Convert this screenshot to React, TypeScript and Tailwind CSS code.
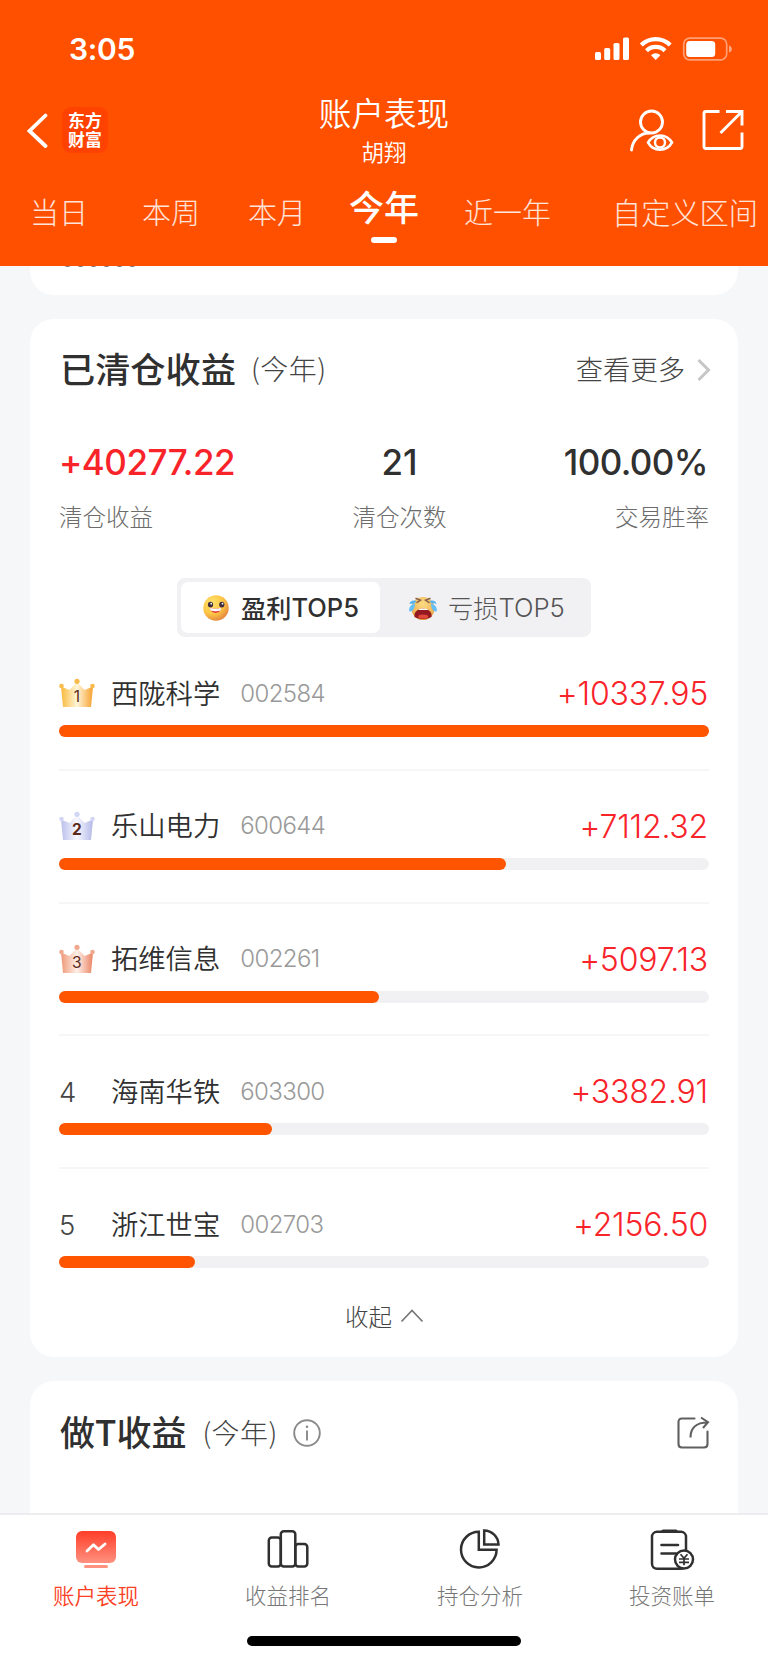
import { ReactNode } from 'react'

const profits = [
  { rank: 1, name: '西陇科学', code: '002584', amount: '+10337.95', width: 650 },
  { rank: 2, name: '乐山电力', code: '600644', amount: '+7112.32', width: 447 },
  { rank: 3, name: '拓维信息', code: '002261', amount: '+5097.13', width: 320 },
  { rank: 4, name: '海南华铁', code: '603300', amount: '+3382.91', width: 213 },
  { rank: 5, name: '浙江世宝', code: '002703', amount: '+2156.50', width: 136 },
]

const crownColors = [
  ['#f9b93c', '#fff6d8', '#f7a02f', '#f9bb4b'],
  ['#bcc0ea', '#f7f8ff', '#b3b9e8', '#d3d6f3'],
  ['#ee9878', '#fff0e8', '#ea8464', '#f1a88e'],
]

function Crown({ rank }: { rank: number }) {
  const [left, mid, right, dot] = crownColors[rank - 1]
  return (
    <svg width="36" height="30" viewBox="0 0 36 30">
      <defs>
        <linearGradient id={`crown${rank}`} x1="0" x2="1" y1="0" y2="0">
          <stop offset="0" stopColor={left} />
          <stop offset="0.5" stopColor={mid} />
          <stop offset="1" stopColor={right} />
        </linearGradient>
      </defs>
      <path d="M2 8.500 L10.500 12 L18 4 L25.500 12 L34 8.500 L32 29 H4 Z" fill={`url(#crown${rank})`} />
      <circle cx="2.500" cy="8" r="2.300" fill={dot} />
      <circle cx="18" cy="3.300" r="2.600" fill={dot} />
      <circle cx="33.500" cy="8" r="2.300" fill={dot} />
      <text
        x="17.800"
        y="24"
        textAnchor="middle"
        fontSize="15.500"
        fontFamily="Inter, sans-serif"
        fontWeight={rank === 2 ? 700 : 400}
        fill="#5c2a1c"
      >
        {rank}
      </text>
    </svg>
  )
}

function StatusIcons() {
  return (
    <svg width="140" height="26" viewBox="0 0 140 26" fill="#fff">
      <rect x="0" y="16" width="6" height="8" rx="1.600" />
      <rect x="9.200" y="12" width="6" height="12" rx="1.600" />
      <rect x="18.500" y="7" width="6" height="17" rx="1.600" />
      <rect x="28" y="1.500" width="6" height="22.500" rx="1.600" />
      <g fill="none" stroke="#fff" strokeWidth="4.200">
        <path d="M46.300 9 A20.500 20.500 0 0 1 75.200 9" />
        <path d="M51.500 14.800 A13 13 0 0 1 70 14.800" />
      </g>
      <path d="M60.700 24 L56 19.200 A6.600 6.600 0 0 1 65.400 19.200 Z" />
      <rect x="88.700" y="2.200" width="43" height="21.600" rx="6" fill="none" stroke="#fff" strokeOpacity="0.450" strokeWidth="1.700" />
      <rect x="91.200" y="5" width="29" height="16" rx="3.500" />
      <path d="M134 9.500 C137.800 10.500 137.800 15.500 134 16.500 Z" fillOpacity="0.500" />
    </svg>
  )
}

function Tab({ children, className }: { children: ReactNode; className: string }) {
  return <span className={`whitespace-nowrap leading-[40px] font-light text-white/85 ${className}`}>{children}</span>
}

function HappyFace() {
  return (
    <svg width="26" height="26" viewBox="0 0 26 26">
      <defs>
        <radialGradient id="happy" cx="0.35" cy="0.3" r="0.8">
          <stop offset="0" stopColor="#ffe46c" />
          <stop offset="0.550" stopColor="#fcc544" />
          <stop offset="1" stopColor="#e07a3e" />
        </radialGradient>
      </defs>
      <circle cx="13" cy="13" r="12.700" fill="url(#happy)" />
      <ellipse cx="7.500" cy="9.600" rx="2.600" ry="2.900" fill="#3d2b3d" />
      <ellipse cx="18.800" cy="9.600" rx="2.600" ry="2.900" fill="#3d2b3d" />
      <circle cx="8.200" cy="8.700" r="0.900" fill="#fff" />
      <circle cx="19.500" cy="8.700" r="0.900" fill="#fff" />
      <path d="M7 12.800 Q12.500 14.500 18 12.800 C18 19.500 7.500 19.800 7 12.800 Z" fill="#e2403f" />
      <path d="M7 12.800 Q12.500 14.500 18 12.800 L17.600 15.600 Q12.500 17 7.600 15.600 Z" fill="#fff" />
    </svg>
  )
}

function CryFace() {
  return (
    <svg width="30" height="26" viewBox="0 0 30 26">
      <defs>
        <radialGradient id="cry" cx="0.5" cy="0.3" r="0.7">
          <stop offset="0" stopColor="#fbdc84" />
          <stop offset="0.700" stopColor="#f3b95a" />
          <stop offset="1" stopColor="#e09038" />
        </radialGradient>
      </defs>
      <ellipse cx="15" cy="13.500" rx="11.500" ry="11.500" fill="url(#cry)" />
      <path d="M7.500 3.200 L12.500 5.200 L8.500 7.800 M22.500 3.200 L17.500 5.200 L21.500 7.800" fill="none" stroke="#8a6550" strokeWidth="1.500" />
      <path d="M6.500 22 C5 10.500 25 10.500 23.500 22 C19 24.500 11 24.500 6.500 22 Z" fill="#941a20" />
      <path d="M10.500 14.200 C13 13.200 17.500 13.200 20 14.200 L19.500 15 H11 Z" fill="#fff" />
      <ellipse cx="15.200" cy="21.500" rx="5" ry="2" fill="#e0483c" />
      <path d="M8.500 6 C5 4.500 2 6 1.500 9 C4 8.500 6.500 9.500 8.500 6 Z M21.500 6 C25 4.500 28 6 28.500 9 C26 8.500 23.500 9.500 21.500 6 Z" fill="#53b4f4" />
      <path d="M7 8.500 C3 9.500 0 13 1.500 16.500 C5 17 7 13 7 8.500 Z M23 8.500 C27 9.500 30 13 28.500 16.500 C25 17 23 13 23 8.500 Z" fill="#65bef5" />
    </svg>
  )
}

function Header() {
  return (
    <header className="flex h-[266px] shrink-0 flex-col bg-[#ff5000] text-white">
      <div className="flex h-[84px] items-start justify-between pt-[36px] pr-[33px] pl-[69px]">
        <span className="font-[Inter] text-[30px] leading-[27px] font-semibold tracking-[-0.300px]">3:05</span>
        <StatusIcons />
      </div>
      <div className="grid h-[96px] grid-cols-3">
        <div className="flex items-start pt-[23px] pl-[27px]">
          <svg width="21" height="48" viewBox="0 0 21 48" fill="none" stroke="#fff" strokeWidth="3.800">
            <path d="M18.500 8.500 L2.500 24 L18.500 39" strokeLinecap="round" />
          </svg>
          <div className="ml-[14px] flex size-[46px] flex-col items-center justify-center rounded-[9px] bg-[#ff4200] pt-[2px] font-['Liberation_Sans','Noto_Sans_CJK_SC',sans-serif] text-[16.900px] leading-[19.500px] font-bold">
            <span>东方</span>
            <span>财富</span>
          </div>
        </div>
        <div className="flex flex-col items-center pt-[8px]">
          <h1 className="text-[32.600px] leading-[40px] font-[350]">账户表现</h1>
          <span className="mt-[5px] text-[22.500px] leading-[28px] font-[350]">胡翔</span>
        </div>
        <div className="flex items-start justify-end pt-[23px] pr-[23px]">
          <svg width="46" height="46" viewBox="0 0 46 46" fill="none" stroke="#fff" strokeWidth="2.900">
            <circle cx="22.500" cy="15" r="11" />
            <path d="M2.500 43 C3.500 33 11 26 20.500 26" strokeLinecap="round" />
            <path d="M19 35.500 C24.500 26 37.500 26 43 35.500 C37.500 45 24.500 45 19 35.500 Z" strokeWidth="2.500" />
            <circle cx="31" cy="35.500" r="5" strokeWidth="2.500" />
          </svg>
          <svg className="ml-[26px]" width="44" height="46" viewBox="0 0 44 46" fill="none" stroke="#fff" strokeWidth="2.900">
            <path d="M18.500 4.500 H5 Q3 4.500 3 6.500 V39.500 Q3 41.500 5 41.500 H39 Q41 41.500 41 39.500 V25.500" />
            <path d="M25 4.500 H41 V18.500 M40 5.500 L19.500 26" />
          </svg>
        </div>
      </div>
      <nav className="flex h-[86px] items-start pt-[11px]">
        <Tab className="ml-[30px] text-[29px]">当日</Tab>
        <Tab className="ml-[54px] text-[29px]">本周</Tab>
        <Tab className="ml-[48px] text-[29px]">本月</Tab>
        <div className="ml-[43px] flex w-[70px] flex-col items-center">
          <span className="-mt-[5px] text-[35px] leading-[40px] font-medium whitespace-nowrap">今年</span>
          <span className="mt-[11px] h-[6px] w-[26px] rounded-full bg-white" />
        </div>
        <Tab className="ml-[45px] text-[29px]">近一年</Tab>
        <Tab className="ml-[61px] text-[29.200px]">自定义区间</Tab>
      </nav>
    </header>
  )
}

function Stats() {
  return (
    <div className="mt-[43px] flex h-[104px] justify-between">
      <div>
        <p className="font-[Inter] text-[35px] leading-[54px] font-medium tracking-[-0.500px] text-[#f9232a]">+40277.22</p>
        <p className="mt-[9px] text-[23.500px] leading-[36px] font-light text-[#6c6c6c]">清仓收益</p>
      </div>
      <div className="text-center">
        <p className="font-[Inter] text-[35px] leading-[54px] font-medium">21</p>
        <p className="mt-[9px] text-[23.500px] leading-[36px] font-light text-[#6c6c6c]">清仓次数</p>
      </div>
      <div className="text-right">
        <p className="pr-[1px] font-[Inter] text-[35px] leading-[54px] font-medium tracking-[-0.600px]">100.00%</p>
        <p className="mt-[9px] text-[23.500px] leading-[36px] font-light text-[#6c6c6c]">交易胜率</p>
      </div>
    </div>
  )
}

function TopSwitch() {
  return (
    <div className="mx-auto flex h-[59px] w-[414px] rounded-[8px] bg-[#f1f1f4] p-[4px]">
      <div className="flex w-[199px] items-center rounded-[7px] bg-white pl-[22px]">
        <HappyFace />
        <span className="-mt-[2px] ml-[12px] flex items-center text-[25.200px] leading-[36px] font-medium whitespace-nowrap">
          盈利<span className="mt-[2px] font-[Inter] text-[25.500px]">TOP5</span>
        </span>
      </div>
      <div className="flex flex-1 items-center pl-[28px]">
        <CryFace />
        <span className="-mt-[2px] ml-[10px] flex items-center text-[25.200px] leading-[36px] font-light whitespace-nowrap text-[#555]">
          亏损<span className="mt-[2px] font-[Inter] text-[25.700px]">TOP5</span>
        </span>
      </div>
    </div>
  )
}

function ProfitList() {
  return (
    <ul className="mt-[1px]">
      {profits.map((item) => (
        <li key={item.rank} className="flex h-[132.800px] flex-col border-b-2 border-[#f6f6f7] pt-[35px] last:h-[102px] last:border-0">
          <div className="flex h-[40px] items-center">
            <div className="flex w-[52px] items-center">
              {item.rank <= 3 ? (
                <Crown rank={item.rank} />
              ) : (
                <span className="mt-[2px] font-[Inter] text-[27.500px] font-light text-[#444]">{item.rank}</span>
              )}
            </div>
            <span className="-mt-[3px] text-[27.300px] leading-[40px] font-[350] whitespace-nowrap">{item.name}</span>
            <span className="mt-[1px] ml-[20px] font-[Inter] text-[24px] leading-[40px] font-[350] tracking-[-0.600px] text-[#999]">{item.code}</span>
            <span className="mt-[2px] ml-auto pr-[1px] font-[Inter] text-[32px] leading-[40px] font-[350] tracking-[-0.200px] text-[#f9232a]">{item.amount}</span>
          </div>
          <div className="mt-[12px] h-[12px] rounded-full bg-[#f1f1f4]">
            <div className="h-full rounded-full bg-[#ff5500]" style={{ width: item.width }} />
          </div>
        </li>
      ))}
    </ul>
  )
}

function NavItem({ label, active, children }: { label: string; active?: boolean; children: ReactNode }) {
  return (
    <div className="flex flex-1 flex-col items-center pt-[14px]">
      <svg width="46" height="44" viewBox="0 0 46 44" fill="none" stroke="#303030" strokeWidth="2.500">
        {children}
      </svg>
      <span className={`mt-[6px] text-[21.500px] leading-[32px] ${active ? 'font-[350] text-[#fb3f25]' : 'font-light text-[#777]'}`}>{label}</span>
    </div>
  )
}

function BottomNav() {
  return (
    <footer className="flex h-[150px] shrink-0 flex-col border-t-2 border-[#ededef] bg-white">
      <div className="flex h-[121px]">
        <NavItem label="账户表现" active>
          <defs>
            <linearGradient id="active" x1="0" x2="0" y1="0" y2="1">
              <stop offset="0" stopColor="#ff3d28" />
              <stop offset="1" stopColor="#ff9180" />
            </linearGradient>
          </defs>
          <rect x="3" y="2" width="40" height="32" rx="6" fill="url(#active)" stroke="none" />
          <path d="M14 22 L20.500 15.800 L25.500 20.500 L32 15" stroke="#fff" strokeWidth="2.800" strokeLinecap="round" strokeLinejoin="round" />
          <rect x="11" y="36" width="24" height="3" rx="1.500" fill="#ff9180" stroke="none" />
        </NavItem>
        <NavItem label="收益排名">
          <rect x="3.800" y="8.500" width="12" height="29" rx="3" />
          <rect x="15.800" y="2.300" width="14.500" height="35.200" rx="3" />
          <rect x="30.300" y="15" width="12" height="22.500" rx="3" />
        </NavItem>
        <NavItem label="持仓分析">
          <path d="M21.800 2.800 A17.800 17.800 0 1 0 39.600 20.800 H21.800 Z" />
          <path d="M27.200 1.500 A14.500 14.500 0 0 1 41.500 15.500 H27.200 Z" />
        </NavItem>
        <NavItem label="投资账单">
          <rect x="3" y="2.800" width="34" height="37" rx="5" />
          <path d="M14 2.200 H27" strokeWidth="3.500" strokeLinecap="round" />
          <path d="M12.500 16 H29 M12.500 24.500 H27" strokeWidth="2.600" strokeLinecap="round" />
          <circle cx="35" cy="30.500" r="9" fill="#fff" />
          <path d="M31.500 25.200 L35 29.200 L38.500 25.200 M35 29.200 V36.200 M30 30 H40 M30 33.300 H40" strokeWidth="1.700" />
        </NavItem>
      </div>
      <div className="mx-auto h-[10px] w-[274px] rounded-full bg-black" />
    </footer>
  )
}

export default function App() {
  return (
    <div className="flex h-[1663px] w-[768px] flex-col overflow-hidden bg-[#f6f7f9] font-['Noto_Sans_CJK_SC',sans-serif] text-[#303030]">
      <Header />
      <main className="flex h-[1247px] flex-col overflow-hidden px-[30px]">
        {/* tail of the card scrolled under the header */}
        <section className="h-[29px] shrink-0 overflow-hidden rounded-b-[24px] bg-white pl-[31px]">
          <p className="-mt-[20px] font-[Inter] text-[21px] leading-[28px] font-light text-[#777]">000000</p>
        </section>

        <section className="mt-[24px] flex h-[1038px] shrink-0 flex-col rounded-[24px] bg-white px-[29px]">
          <div className="mt-[25px] flex h-[48px] items-center justify-between">
            <div className="flex items-center pl-[1px]">
              <h2 className="-mt-[1px] text-[35.200px] leading-[48px] font-medium">已清仓收益</h2>
              <span className="ml-[15px] text-[28px] font-light tracking-[0.500px] text-[#444]">(今年)</span>
            </div>
            <div className="-mr-[2px] flex items-center text-[27.300px] font-light text-[#444]">
              <span>查看更多</span>
              <svg className="mt-[3px] ml-[11px]" width="15" height="24" viewBox="0 0 15 24" fill="none" stroke="#c6c6c6" strokeWidth="3">
                <path d="M2.500 2 L12.500 12 L2.500 22" />
              </svg>
            </div>
          </div>
          <Stats />
          <div className="mt-[39px]">
            <TopSwitch />
          </div>
          <ProfitList />
          <div className="mt-[27px] flex items-center justify-center pl-[1px] text-[23.500px] leading-[36px] font-light text-[#444]">
            收起
            <svg className="ml-[8px]" width="24" height="16" viewBox="0 0 24 16" fill="none" stroke="#777" strokeWidth="1.700">
              <path d="M1.500 13.500 L12 2.500 L22.500 13.500" />
            </svg>
          </div>
        </section>

        <section className="mt-[24px] h-[200px] shrink-0 rounded-t-[24px] bg-white px-[29px] pt-[28px]">
          <div className="flex h-[48px] items-center">
            <h2 className="-mt-[5px] pl-[1px] text-[35px] leading-[48px] font-medium">做T收益</h2>
            <span className="-mt-[3px] ml-[16px] text-[28px] font-light tracking-[0.400px] text-[#444]">(今年)</span>
            <svg className="ml-[15px]" width="28" height="28" viewBox="0 0 28 28" fill="none" stroke="#8a8a8a" strokeWidth="1.900">
              <circle cx="14" cy="14" r="12.800" />
              <path d="M14 11.500 V21.500" />
              <circle cx="14" cy="7.800" r="1.300" fill="#8a8a8a" stroke="none" />
            </svg>
            <svg className="-mr-[1px] ml-auto" width="34" height="34" viewBox="0 0 34 34" fill="none" stroke="#606060" strokeWidth="2.100">
              <path d="M18.500 2.500 H6 Q2.500 2.500 2.500 6 V28 Q2.500 31.500 6 31.500 H28 Q31.500 31.500 31.500 28 V15.500" strokeLinecap="round" />
              <path d="M14.500 21.500 C14.500 12.500 20 6.500 31.500 6.500 M25 1.500 L32 6.200 L27 12" />
            </svg>
          </div>
        </section>
      </main>
      <BottomNav />
    </div>
  )
}
